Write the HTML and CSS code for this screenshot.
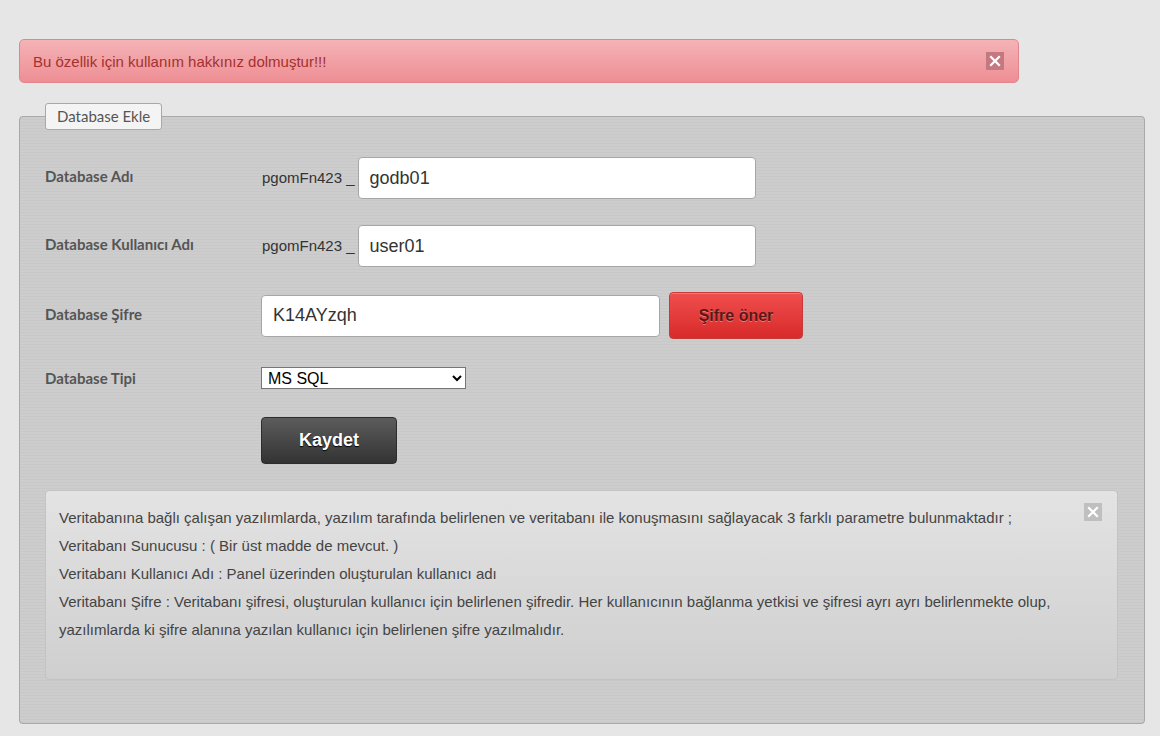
FILE: index.html
```html
<!DOCTYPE html>
<html lang="tr">
<head>
<meta charset="utf-8">
<title>Database Ekle</title>
<link rel="stylesheet" href="styles.css">
</head>
<body>
<div class="page">
  <div class="alert">
    <span class="alert-text">Bu özellik için kullanım hakkınız dolmuştur!!!</span>
    <span class="close close-red" aria-label="Kapat">
      <svg viewBox="0 0 18 18" width="18" height="18"><path d="M5 5L13 13M13 5L5 13" stroke="#fff" stroke-width="2.2" stroke-linecap="square"/></svg>
    </span>
  </div>

  <fieldset class="panel">
    <legend class="panel-title">Database Ekle</legend>

    <div class="form">
      <div class="row row-1">
        <label class="label">Database Adı</label>
        <div class="control">
          <span class="prefix">pgomFn423 _</span>
          <input class="text-input" type="text" value="godb01">
        </div>
      </div>

      <div class="row row-2">
        <label class="label">Database Kullanıcı Adı</label>
        <div class="control">
          <span class="prefix">pgomFn423 _</span>
          <input class="text-input" type="text" value="user01">
        </div>
      </div>

      <div class="row row-3">
        <label class="label">Database Şifre</label>
        <div class="control control-gap">
          <input class="text-input" type="text" value="K14AYzqh">
          <button class="btn btn-red" type="button">Şifre öner</button>
        </div>
      </div>

      <div class="row row-4">
        <label class="label label-low">Database Tipi</label>
        <div class="control">
          <select class="select">
            <option>MS SQL</option>
            <option>MySQL</option>
          </select>
        </div>
      </div>

      <div class="row row-5">
        <span class="label"></span>
        <div class="control">
          <button class="btn btn-dark" type="submit">Kaydet</button>
        </div>
      </div>
    </div>

    <div class="info">
      <span class="close close-gray" aria-label="Kapat">
        <svg viewBox="0 0 18 18" width="18" height="18"><path d="M5 5L13 13M13 5L5 13" stroke="#fff" stroke-width="2.2" stroke-linecap="square"/></svg>
      </span>
      <p>Veritabanına bağlı çalışan yazılımlarda, yazılım tarafında belirlenen ve veritabanı ile konuşmasını sağlayacak 3 farklı parametre bulunmaktadır ;</p>
      <p>Veritabanı Sunucusu : ( Bir üst madde de mevcut. )</p>
      <p>Veritabanı Kullanıcı Adı : Panel üzerinden oluşturulan kullanıcı adı</p>
      <p>Veritabanı Şifre : Veritabanı şifresi, oluşturulan kullanıcı için belirlenen şifredir. Her kullanıcının bağlanma yetkisi ve şifresi ayrı ayrı belirlenmekte olup, yazılımlarda ki şifre alanına yazılan kullanıcı için belirlenen şifre yazılmalıdır.</p>
    </div>
  </fieldset>
</div>
</body>
</html>
```

FILE: styles.css
```css
* { box-sizing: border-box; }

html, body {
  margin: 0;
  padding: 0;
}

body {
  background: #e6e6e6;
  font-family: Arial, "Liberation Sans", sans-serif;
  color: #333;
  width: 1160px;
  height: 736px;
  overflow: hidden;
}

.page {
  padding: 39px 16px 0 19px;
  display: flex;
  flex-direction: column;
}

/* Alert */
.alert {
  width: 1000px;
  height: 44px;
  border: 1px solid #e4858c;
  border-radius: 5px;
  background: linear-gradient(#f4b3b6, #ee8e94);
  display: flex;
  align-items: center;
  justify-content: space-between;
  padding: 0 14px 0 13px;
}

.alert-text {
  font-size: 15px;
  color: #a4312f;
}

.close {
  width: 18px;
  height: 18px;
  display: flex;
}

.close-red {
  background: #c5787f;
}

.close-gray {
  background: #bfbfbf;
  position: absolute;
  top: 12px;
  right: 15px;
}

/* Panel */
.panel {
  margin: 20px 0 0 0;
  width: 1126px;
  height: 621px;
  border: 1px solid #a9a9a9;
  border-radius: 4px;
  padding: 0 26px 0 25px;
  background-color: #cbcbcb;
  background-image: repeating-linear-gradient(180deg, #cdcdcd 0px, #cdcdcd 2px, #c8c8c8 2px, #c8c8c8 3px);
  min-width: 0;
}

.panel-title {
  font-family: Lato, "Open Sans", sans-serif;
  font-size: 15px;
  color: #555;
  background: #f4f4f4;
  border: 1px solid #a8a8a8;
  border-radius: 3px;
  height: 27px;
  line-height: 25px;
  padding: 0 11px;
}

.form {
  display: flex;
  flex-direction: column;
  padding-top: 27px;
}

.row {
  display: grid;
  grid-template-columns: 216px 1fr;
  align-items: center;
}

.row-1 { height: 42px; }
.row-2 { height: 42px; margin-top: 26px; }
.row-3 { height: 47px; margin-top: 25px; }
.row-4 { height: 22px; margin-top: 28px; }
.row-5 { height: 47px; margin-top: 28px; }

.label {
  font-family: Lato, "Open Sans", sans-serif;
  font-weight: 700;
  font-size: 15px;
  color: #555;
  padding-bottom: 4px;
}

.label-low { padding-bottom: 0; }

.control {
  display: flex;
  align-items: center;
  gap: 3px;
  height: 100%;
}

.control-gap { gap: 9px; }

.prefix {
  font-size: 15px;
  color: #333;
  padding-left: 1px;
  padding-bottom: 2px;
}

.text-input {
  width: 398px;
  height: 42px;
  border: 1px solid #a6a6a6;
  border-radius: 4px;
  background: #fff;
  padding: 0 11px;
  font-family: Arial, "Liberation Sans", sans-serif;
  font-size: 18px;
  color: #333;
  outline: none;
}

.row-3 .text-input { width: 399px; height: 42px; }

.btn {
  height: 47px;
  border-radius: 4px;
  font-family: Arial, "Liberation Sans", sans-serif;
  font-weight: 700;
  cursor: pointer;
}

.btn-red {
  width: 134px;
  border: 1px solid #c63a3a;
  background: linear-gradient(#f04e4e, #d82a2a);
  color: #5b1818;
  font-size: 16px;
  text-shadow: 0 1px 0 rgba(255, 160, 160, 0.6);
  box-shadow: inset 0 1px 0 rgba(255,255,255,0.25);
}

.btn-dark {
  width: 136px;
  border: 1px solid #2d2d2d;
  background: linear-gradient(#5c5c5c, #333333);
  color: #fff;
  font-size: 18px;
  text-shadow: 0 1px 1px #000;
}

.select {
  width: 205px;
  height: 22px;
  border: 1px solid #767676;
  border-radius: 0;
  background: #fff;
  font-family: Arial, "Liberation Sans", sans-serif;
  font-size: 16px;
  color: #000;
  padding: 0 2px;
}

/* Info box */
.info {
  position: relative;
  margin-top: 26px;
  height: 190px;
  border: 1px solid #c3c3c3;
  border-radius: 4px;
  background: linear-gradient(#e3e3e3, #cfcfcf);
  padding: 13px 60px 0 13px;
}

.info p {
  margin: 0;
  font-size: 15px;
  line-height: 28px;
  color: #444;
}
```
